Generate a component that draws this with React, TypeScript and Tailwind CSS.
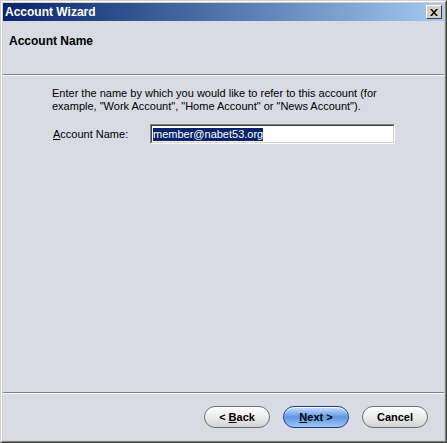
import React from 'react';

const FONT = { fontFamily: '"Liberation Sans", Arial, sans-serif' };

function CloseButton() {
  return (
    <div className="mr-[1px] flex h-[14px] w-[16px] items-center justify-center border border-t-white border-l-white border-r-[#404040] border-b-[#404040] bg-[#d4d0c8]">
      <svg width="8" height="7" viewBox="0 0 8 7">
        <path d="M0 0h2l2 2.5L6 0h2L5 3.5 8 7H6L4 4.5 2 7H0l3-3.5z" fill="#000" />
      </svg>
    </div>
  );
}

function PillButton({ children, primary }: { children: React.ReactNode; primary?: boolean }) {
  const look = primary
    ? 'border-[#1f3d86] bg-linear-to-b from-[#cfe2fb] via-[#5f97e0] to-[#9fc6f4]'
    : 'border-[#6e6e6e] bg-linear-to-b from-white via-[#ececec] to-[#d2d2d2]';
  return (
    <button
      className={`flex h-[22px] w-[66px] items-center justify-center rounded-full border text-[11px] font-bold text-black shadow-[inset_0_1px_0_rgba(255,255,255,0.9)] ${look}`}
      style={FONT}
    >
      {children}
    </button>
  );
}

function Separator() {
  return (
    <div>
      <div className="h-px bg-[#808080]" />
      <div className="h-px bg-white" />
    </div>
  );
}

export default function App() {
  return (
    <div className="h-[443px] w-[447px] border border-t-[#d4d0c8] border-l-[#d4d0c8] border-r-[#404040] border-b-[#404040]" style={FONT}>
      <div className="h-full border border-t-white border-l-white border-r-[#808080] border-b-[#808080]">
        <div className="flex h-full flex-col border border-[#d4d0c8] bg-[#d8dbe3]">
          {/* Title bar */}
          <div className="flex h-[18px] items-center justify-between bg-linear-to-r from-[#0a246a] to-[#a6caf0] pl-[2px] pr-[1px]">
            <span className="text-[12px] font-bold leading-none text-white">Account Wizard</span>
            <CloseButton />
          </div>

          {/* Page header */}
          <div className="h-[53px] pl-[6px] pt-[7px]">
            <span className="text-[12px] font-bold text-black">Account Name</span>
          </div>
          <Separator />

          {/* Body */}
          <div className="flex-1 pl-[49px] pt-[11px]">
            <p className="w-[340px] text-[11px] leading-[13px] text-black">
              Enter the name by which you would like to refer to this account (for example, "Work Account", "Home Account" or "News Account").
            </p>
            <div className="mt-[11px] flex items-center">
              <label className="w-[98px] pl-px text-[11px] text-black">
                <span className="underline">A</span>ccount Name:
              </label>
              <div className="h-[20px] w-[245px] border border-t-[#808080] border-l-[#808080] border-r-white border-b-white">
                <div className="flex h-full items-center border border-t-[#404040] border-l-[#404040] border-r-[#d4d0c8] border-b-[#d4d0c8] bg-white pl-px">
                  <span className="bg-[#0a246a] text-[11px] leading-[13px] text-white">member@nabet53.org</span>
                </div>
              </div>
            </div>
          </div>

          <Separator />
          {/* Footer buttons */}
          <div className="flex h-[46px] items-center justify-end gap-[13px] pr-[16px]">
            <PillButton>
              &lt; <span className="ml-[3px] underline">B</span>ack
            </PillButton>
            <PillButton primary>
              <span className="underline">N</span>ext &gt;
            </PillButton>
            <PillButton>Cancel</PillButton>
          </div>
        </div>
      </div>
    </div>
  );
}
